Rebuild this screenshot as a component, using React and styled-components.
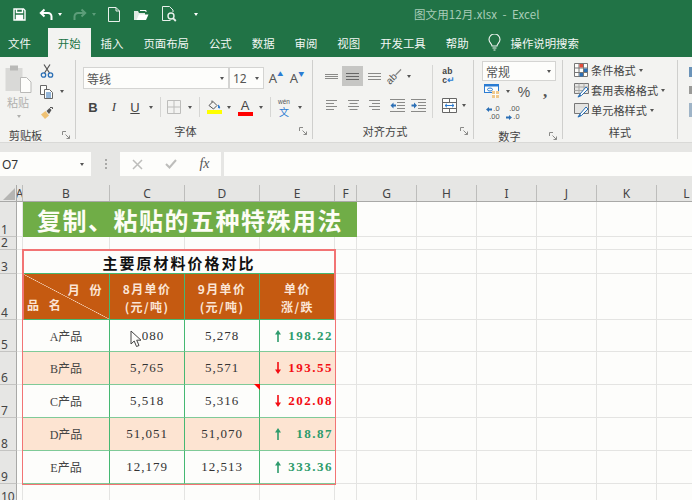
import React from "react";
import styled, { createGlobalStyle } from "styled-components";

const UI_FONT = `"Noto Sans", "Noto Sans CJK SC", sans-serif`;
const CJK_FONT = `"Noto Sans CJK SC", "Noto Sans", sans-serif`;
const CELL_FONT = `"Liberation Serif", "Noto Sans CJK SC", serif`;

const COLS = [17, 6, 87, 75, 75, 75, 22, 60, 60, 60, 60, 60, 60];
const ROWS = [35, 13, 24, 46, 32, 33, 33, 33, 33, 20];
const COL_NAMES = ["A", "B", "C", "D", "E", "F", "G", "H", "I", "J", "K", "L"];

const PRODUCTS = [
  { name: "A产品", aug: "5,080", sep: "5,278", diff: "198.22", up: true },
  { name: "B产品", aug: "5,765", sep: "5,571", diff: "193.55", up: false },
  { name: "C产品", aug: "5,518", sep: "5,316", diff: "202.08", up: false },
  { name: "D产品", aug: "51,051", sep: "51,070", diff: "18.87", up: true },
  { name: "E产品", aug: "12,179", sep: "12,513", diff: "333.36", up: true },
];

const GlobalStyle = createGlobalStyle`
  html, body {
    margin: 0;
    padding: 0;
    width: 692px;
    height: 500px;
    overflow: hidden;
    background: #e6e6e4;
  }
  * { box-sizing: border-box; }
`;

const Page = styled.div`
  width: 692px;
  height: 500px;
  overflow: hidden;
  font-family: ${CJK_FONT};
  background: #e6e6e4;
`;

const TitleBar = styled.div`
  height: 28px;
  display: flex;
  align-items: center;
  background: #217346;
`;

const Slot = styled.div`
  width: ${(p) => p.$w}px;
  height: 100%;
  flex: none;
  display: flex;
  align-items: center;
  justify-content: center;
  color: #444;
`;

const Caret = styled.i`
  width: 0;
  height: 0;
  border-left: 2.5px solid transparent;
  border-right: 2.5px solid transparent;
  border-top: 3px solid ${(p) => p.$color || "#555"};
`;

const FileName = styled.div`
  margin-left: 210px;
  font-size: 11.5px;
  letter-spacing: 0.1px;
  color: #a9cdb8;
  white-space: pre;
`;

const TabBar = styled.div`
  height: 29px;
  display: flex;
  align-items: stretch;
  background: #217346;
`;

const Tab = styled.div`
  padding: 0 10px;
  display: flex;
  align-items: center;
  font-size: 11.4px;
  color: ${(p) => (p.$active ? "#217346" : "#f2f7f4")};
  background: ${(p) => (p.$active ? "#f3f3f1" : "transparent")};
  &:first-child {
    padding-left: 8px;
    padding-right: 17px;
  }
`;

const SearchTab = styled(Tab)`
  margin-left: 9px;
  padding: 0;
  gap: 10px;
`;

const Ribbon = styled.div`
  height: 86px;
  padding: 3px 0;
  display: flex;
  overflow: hidden;
  background: #f3f3f1;
  border-bottom: 1px solid #d9d9d7;
`;

const Group = styled.div`
  width: ${(p) => p.$w}px;
  flex: none;
  display: flex;
  flex-direction: column;
  border-right: 1px solid #cfcfcd;
  &:last-child {
    border-right: none;
  }
`;

const GroupBody = styled.div`
  height: 64px;
  display: flex;
  padding-left: ${(p) => p.$left || 0}px;
  padding-top: ${(p) => p.$top || 0}px;
`;

const GroupLabel = styled.div`
  flex: 1;
  display: flex;
  align-items: center;
  padding-top: 4px;
`;

const LabelText = styled.div`
  flex: 1;
  text-align: center;
  padding-right: ${(p) => p.$pad || 0}px;
  font-size: 11.2px;
  color: #444;
`;

const Launcher = styled.svg`
  width: 9px;
  height: 9px;
  margin-right: 4px;
  flex: none;
`;

const Stack = styled.div`
  display: flex;
  flex-direction: column;
  gap: ${(p) => p.$gap || 0}px;
`;

const Row = styled.div`
  height: ${(p) => p.$h || 22}px;
  display: flex;
  align-items: center;
`;

const PasteColumn = styled.div`
  width: 37px;
  padding-top: 5px;
  flex: none;
  display: flex;
  flex-direction: column;
  align-items: center;
`;

const PasteText = styled.div`
  margin-top: 1px;
  margin-left: -1px;
  font-size: 11px;
  line-height: 16px;
  color: #b0b0ae;
`;

const PasteCaret = styled(Caret)`
  margin-top: 5px;
`;

const ComboBox = styled.div`
  width: ${(p) => p.$w}px;
  height: ${(p) => p.$h || 22}px;
  padding: 0 4px 0 3px;
  flex: none;
  display: flex;
  align-items: center;
  justify-content: space-between;
  font-size: 12px;
  color: #555;
  background: #fdfdfb;
  border: 1px solid #d4d4d2;
`;

const SizeUnit = styled.span`
  font-family: ${UI_FONT};
  font-size: 12px;
`;

const GrowGlyph = styled.span`
  display: flex;
  font-family: ${UI_FONT};
  font-size: 13px;
  line-height: 14px;
  color: #555;
`;

const Mini = styled.span`
  font-size: 6px;
  line-height: 6px;
  color: ${(p) => p.$color || "#2b7cd3"};
`;

const StyleGlyph = styled.span`
  font-family: ${(p) => (p.$serif ? `"Liberation Serif", serif` : `"Liberation Sans", sans-serif`)};
  font-size: 13px;
  font-weight: ${(p) => (p.$bold ? 700 : 400)};
  font-style: ${(p) => (p.$italic ? "italic" : "normal")};
  text-decoration: ${(p) => (p.$under ? "underline" : "none")};
  color: #444;
`;

const RowDivider = styled.i`
  width: 1px;
  height: 20px;
  background: #d6d6d4;
`;

const ColorGlyph = styled.div`
  display: flex;
  flex-direction: column;
  align-items: center;
  width: 16px;
`;

const ColorBar = styled.i`
  width: 15px;
  height: 4px;
  background: ${(p) => p.$color};
`;

const LetterA = styled.span`
  font-family: "Liberation Sans", sans-serif;
  font-size: 13px;
  line-height: 13px;
  color: #444;
`;

const PinyinGlyph = styled.div`
  display: flex;
  flex-direction: column;
  align-items: center;
`;

const Pinyin = styled.span`
  font-family: "Liberation Sans", sans-serif;
  font-size: 6.5px;
  line-height: 8px;
  color: #555;
`;

const PinyinChar = styled.span`
  font-size: 10px;
  line-height: 11px;
  color: #2b7cd3;
`;

const ActiveSlot = styled(Slot)`
  height: 20px;
  background: #c6c6c4;
`;

const ColumnSep = styled.i`
  width: 1px;
  height: 53px;
  margin: 0 5px 0 3px;
  flex: none;
  background: #d6d6d4;
`;

const OrientGlyph = styled.div`
  display: flex;
  align-items: center;
  font-family: "Liberation Sans", sans-serif;
  font-size: 10px;
  line-height: 10px;
  color: #555;
  transform: rotate(-45deg);
`;

const WrapGlyph = styled.div`
  font-family: "Liberation Sans", sans-serif;
  font-size: 8.5px;
  line-height: 9px;
  font-weight: 700;
  letter-spacing: 0.5px;
  color: #444;
`;

const WrapArrow = styled.span`
  color: #2b7cd3;
`;

const Percent = styled.span`
  font-family: "Liberation Sans", sans-serif;
  font-size: 14px;
  color: #555;
`;

const Comma = styled.span`
  font-family: "Liberation Serif", serif;
  font-size: 17px;
  font-weight: 700;
  line-height: 10px;
  color: #555;
`;

const DecimalGlyph = styled.div`
  display: flex;
  flex-direction: column;
  align-items: flex-end;
  font-family: "Liberation Sans", sans-serif;
  font-size: 7.5px;
  line-height: 8px;
  color: #555;
`;

const DecimalLine = styled.span`
  display: flex;
  align-items: center;
  gap: 1px;
`;

const StyleRow = styled.div`
  height: 20px;
  display: flex;
  align-items: center;
  font-size: 11.2px;
  color: #444;
`;

const StyleIcon = styled.div`
  width: 17px;
  flex: none;
  display: flex;
`;

const StyleCaret = styled(Caret)`
  margin-left: 3px;
`;

const CutOff = styled.div`
  padding: 7px 0 0 11px;
  display: flex;
  flex-direction: column;
  gap: 9px;
`;

const CutOffIcon = styled.i`
  width: 4px;
  height: ${(p) => p.$h}px;
  background: ${(p) => p.$color};
`;

const FormulaBar = styled.div`
  height: 24px;
  margin-top: 9px;
  display: flex;
  align-items: stretch;
`;

const NameBox = styled.div`
  width: 91px;
  padding: 0 7px 0 2px;
  flex: none;
  display: flex;
  align-items: center;
  justify-content: space-between;
  font-family: ${UI_FONT};
  font-size: 12px;
  color: #333;
  background: #fdfdfb;
`;

const Grip = styled.div`
  width: 29px;
  flex: none;
  display: flex;
  flex-direction: column;
  align-items: center;
  justify-content: center;
  gap: 2px;
`;

const GripDot = styled.i`
  width: 2px;
  height: 2px;
  background: #a9a9a7;
`;

const FormulaButtons = styled.div`
  width: 101px;
  flex: none;
  display: flex;
  align-items: center;
  background: #fdfdfb;
`;

const FxText = styled.span`
  font-family: "Liberation Serif", serif;
  font-size: 14px;
  font-style: italic;
  color: #555;
`;

const FormulaInput = styled.div`
  flex: 1;
  margin-left: 3px;
  background: #fdfdfb;
`;

const ColumnHead = styled.div`
  height: 17px;
  margin-top: 9px;
  display: grid;
  grid-template-columns: ${COLS.map((c) => `${c}px`).join(" ")};
  border-bottom: 1px solid #a9a9a7;
`;

const Corner = styled.div`
  display: flex;
  align-items: flex-end;
  padding: 0 0 1px 3px;
  border-right: 1px solid #a9a9a7;
`;

const ColName = styled.div`
  display: flex;
  align-items: center;
  justify-content: center;
  padding-top: 1px;
  font-family: ${UI_FONT};
  font-size: 12px;
  line-height: 15px;
  color: #444;
  border-right: 1px solid #bdbdbb;
  overflow: hidden;
`;

const Sheet = styled.div`
  display: grid;
  grid-template-columns: ${COLS.map((c) => `${c}px`).join(" ")};
  grid-template-rows: ${ROWS.map((r) => `${r}px`).join(" ")};
`;

const RowHead = styled.div`
  grid-column: 1;
  grid-row: ${(p) => p.$row};
  padding-left: 1px;
  display: flex;
  align-items: flex-end;
  font-family: ${UI_FONT};
  font-size: 12px;
  line-height: 12px;
  color: #444;
  border-right: 1px solid #a9a9a7;
  border-bottom: 1px solid #c4c4c2;
`;

const GridCell = styled.div`
  grid-column: ${(p) => p.$col};
  grid-row: ${(p) => p.$row};
  background: #fdfdfb;
  border-right: 1px solid #e4e4e2;
  border-bottom: 1px solid #e4e4e2;
`;

const Banner = styled.div`
  grid-column: 3 / 8;
  grid-row: 1;
  display: flex;
  align-items: center;
  justify-content: center;
  font-size: 24px;
  font-weight: 700;
  letter-spacing: 1.5px;
  white-space: nowrap;
  color: #fdfdf5;
  background: #70ad47;
`;

const PriceTable = styled.div`
  grid-column: 3 / 7;
  grid-row: 3 / 10;
  display: grid;
  grid-template-columns: 87px 75px 75px 75px;
  grid-template-rows: ${ROWS.slice(2, 9).map((r) => `${r}px`).join(" ")};
  background: #fdfdfb;
  outline: 2px solid #f27474;
  outline-offset: -1px;
  z-index: 1;
`;

const TableTitle = styled.div`
  grid-column: 1 / 5;
  display: flex;
  align-items: center;
  justify-content: center;
  padding-top: 1px;
  font-size: 15px;
  font-weight: 700;
  letter-spacing: 2px;
  color: #111;
  border-bottom: 1px solid #45b872;
`;

const HeadCell = styled.div`
  display: flex;
  flex-direction: column;
  align-items: center;
  justify-content: center;
  padding-top: 2px;
  font-size: 12px;
  line-height: 18px;
  font-weight: 700;
  letter-spacing: 1.4px;
  white-space: pre;
  color: #fbe5d6;
  background: #c55a11;
  border-right: 1px solid #45b872;
  border-bottom: 1px solid #45b872;
  &:nth-child(5) {
    border-right: none;
  }
`;

const SplitHead = styled(HeadCell)`
  display: block;
  padding: 7px 4px 0 4px;
  background: linear-gradient(
      to top right,
      transparent calc(50% - 0.6px),
      #f6d9c4 50%,
      transparent calc(50% + 0.6px)
    ),
    #c55a11;
`;

const MonthLabel = styled.div`
  text-align: right;
  letter-spacing: 3.5px;
`;

const NameLabel = styled.div`
  margin-top: -3px;
  letter-spacing: 3.5px;
`;

const DataCell = styled.div`
  position: relative;
  display: flex;
  align-items: center;
  justify-content: center;
  font-family: ${CELL_FONT};
  font-size: 13px;
  letter-spacing: 1px;
  color: #333;
  background: ${(p) => (p.$shade ? "#fde4d2" : "#fdfdfb")};
  border-right: 1px solid #45b872;
  border-bottom: 1px solid #7fca98;
`;

const NameCell = styled(DataCell)`
  font-size: 12px;
  letter-spacing: 0;
  color: #444;
`;

const DiffCell = styled(DataCell)`
  justify-content: space-between;
  padding: 0 2px 0 15px;
  font-size: 13px;
  font-weight: 700;
  letter-spacing: 1.5px;
  color: ${(p) => (p.$up ? "#2e9b6c" : "#f30d13")};
  border-right: none;
`;

const CommentMark = styled.i`
  position: absolute;
  top: -1px;
  right: -1px;
  width: 0;
  height: 0;
  border-top: 6px solid #f00;
  border-left: 6px solid transparent;
`;

const PointerIcon = styled.svg`
  position: absolute;
  left: 20px;
  top: 10px;
  width: 12px;
  height: 18px;
`;

const SaveIcon = () => (
  <svg width="13" height="13" viewBox="0 0 13 13" fill="none" stroke="#fff" strokeWidth="1.4">
    <path d="M1 1h9.5L12 2.5V12H1z" />
    <path d="M3.5 1v3.5h6V1" />
    <path d="M3.5 12V7.5h6V12" fill="#fff" />
  </svg>
);

const UndoIcon = ({ color = "#fff" }) => (
  <svg width="15" height="13" viewBox="0 0 15 13" fill="none" stroke={color} strokeWidth="2">
    <path d="M5.5 1.5 1.8 5l3.7 3.5" />
    <path d="M2 5h7a3.5 3.5 0 0 1 3.5 3.5v3.5" />
  </svg>
);

const RedoIcon = () => (
  <svg width="15" height="13" viewBox="0 0 15 13" fill="none" stroke="#5c9d79" strokeWidth="2">
    <path d="M9.5 1.5 13.2 5 9.5 8.5" />
    <path d="M13 5H6a3.5 3.5 0 0 0-3.5 3.5V12" />
  </svg>
);

const NewIcon = () => (
  <svg width="12" height="15" viewBox="0 0 12 15" fill="none" stroke="#e8f0eb" strokeWidth="1">
    <path d="M.5.5h7.5L11.5 4v10.5H.5z" />
    <path d="M8 .5V4h3.5" />
  </svg>
);

const OpenIcon = () => (
  <svg width="16" height="13" viewBox="0 0 16 13">
    <path d="M1 3V12h11V5H6L5 3z" fill="#dfe9e3" />
    <path d="M3.5 12 6 6.5h9.5L13 12z" fill="#fff" />
    <path d="M7 2.5h6V4" fill="none" stroke="#fff" />
  </svg>
);

const PreviewIcon = () => (
  <svg width="15" height="16" viewBox="0 0 15 16" fill="none" stroke="#e8f0eb">
    <path d="M8.5 14.5h-8V.5h7L11 4v2" />
    <circle cx="9" cy="10" r="3" strokeWidth="1.4" />
    <path d="m11 12.2 2.8 2.8" strokeWidth="1.8" />
  </svg>
);

const BulbIcon = () => (
  <svg width="13" height="17" viewBox="0 0 13 17" fill="none" stroke="#f2f7f4" strokeWidth="1.1">
    <path d="M4 12c0-2-3-3.500-3-6.500a5.500 5.500 0 0 1 11 0C12 8.500 9 10 9 12z" />
    <path d="M4.500 14h4M5.500 16h2" />
  </svg>
);

const LauncherIcon = () => (
  <Launcher viewBox="0 0 9 9" fill="none" stroke="#8a8a88">
    <path d="M.5 4V.5H4" />
    <path d="M3.500 3.500 7.500 7.500M7.500 4.500v3h-3" />
  </Launcher>
);

const PasteIcon = () => (
  <svg width="27" height="28" viewBox="0 0 27 28">
    <rect x="0.500" y="3" width="17" height="23" fill="#d9d9d7" />
    <rect x="5" y="0.500" width="8" height="5" fill="#b9b9b7" />
    <path d="M15.500 12.500h6l4.500 4.500v10.500h-10.500z" fill="#fdfdfb" stroke="#b9b9b7" />
  </svg>
);

const ScissorsIcon = () => (
  <svg width="14" height="14" viewBox="0 0 14 14" fill="none">
    <path d="M4 .5 9.500 9M10 .5 4.500 9" stroke="#555" strokeWidth="1.2" />
    <circle cx="3.500" cy="11" r="2.200" stroke="#2b6fb5" strokeWidth="1.3" />
    <circle cx="10.500" cy="11" r="2.200" stroke="#2b6fb5" strokeWidth="1.3" />
  </svg>
);

const CopyIcon = () => (
  <svg width="14" height="14" viewBox="0 0 14 14" fill="#fdfdfb" stroke="#666">
    <path d="M.5.500h6v9h-6z" />
    <path d="M4.500 4.500h5l3 3v6h-8z" />
    <path d="M6 8h5M6 10h5M6 12h5" stroke="#2b6fb5" />
  </svg>
);

const BrushIcon = () => (
  <svg width="14" height="14" viewBox="0 0 14 14">
    <path d="M1 8.500 5.500 5 9 9.500 5 13z" fill="#f0c274" />
    <path d="M6.500 5 9.500 2l2 2-2.500 4z" fill="#555" />
    <path d="M10 1.500h2.500V3" stroke="#555" fill="none" />
  </svg>
);

const BorderIcon = () => (
  <svg width="14" height="14" viewBox="0 0 14 14" fill="none" stroke="#bdbdbb">
    <path d="M.5.500h13v13H.5zM7 .5v13M.5 7h13" />
  </svg>
);

const FillIcon = () => (
  <svg width="15" height="10" viewBox="0 0 15 10" fill="none">
    <path d="M2 5.500 6 1.500l4 4-3.500 3.500z" stroke="#555" />
    <path d="M5 2.500V.5" stroke="#555" />
    <path d="M11 4.500c1.500 1 2.500 2 2 4l-2-.5z" fill="#2b7cd3" />
  </svg>
);

const LinesIcon = ({ widths = [14, 10, 14], align = "left", gap = 3, color = "#8a8a88" }) => {
  const max = Math.max(...widths);
  return (
    <svg width={max} height={(widths.length - 1) * gap + 1} viewBox={`0 0 ${max} ${(widths.length - 1) * gap + 1}`}>
      {widths.map((w, i) => {
        const x = align === "left" ? 0 : align === "right" ? max - w : (max - w) / 2;
        return <rect key={i} x={x} y={i * gap} width={w} height="1" fill={color} />;
      })}
    </svg>
  );
};

const OrientIcon = () => (
  <OrientGlyph>
    ab
    <svg width="8" height="4" viewBox="0 0 8 4" stroke="#8a8a88" strokeWidth="1.300">
      <path d="M0 2h8" />
    </svg>
  </OrientGlyph>
);

const IndentIcon = ({ flip }) => (
  <svg width="15" height="13" viewBox="0 0 15 13">
    <g fill="#8a8a88">
      <rect x="0" y="0" width="15" height="1" />
      <rect x="7" y="3" width="8" height="1" />
      <rect x="7" y="6" width="8" height="1" />
      <rect x="7" y="9" width="8" height="1" />
      <rect x="0" y="12" width="15" height="1" />
    </g>
    <path
      d={flip ? "M6 6.500 3 3.500v2H.5v2H3v2z" : "M.5 6.500l3-3v2H6v2H3.500v2z"}
      fill="#2b6fb5"
    />
  </svg>
);

const MergeIcon = () => (
  <svg width="15" height="15" viewBox="0 0 15 15" fill="#fdfdfb" stroke="#666">
    <path d="M.5.500h14v14H.5z" />
    <path d="M.5 4.500h14M.5 10.500h14M7.500.5v4M7.500 10.500v4" />
    <path d="M3 7.500h9M5 5.800 3 7.500l2 1.700M10 5.800l2 1.700-2 1.700" stroke="#2b7cd3" fill="none" />
  </svg>
);

const CurrencyIcon = () => (
  <svg width="16" height="15" viewBox="0 0 16 15">
    <rect x="0.500" y="0.500" width="14" height="8" fill="#fdfdfb" stroke="#2b7cd3" />
    <rect x="0.500" y="0.500" width="14" height="2" fill="#2b7cd3" />
    <ellipse cx="6" cy="5.500" rx="2.500" ry="1.500" fill="none" stroke="#2b7cd3" />
    <rect x="8" y="7" width="7" height="7" fill="#f0c98c" />
    <path d="M8 10.500h7M11.500 7v7" stroke="#fdfdfb" />
  </svg>
);

const DecimalArrow = ({ flip }) => (
  <svg width="6" height="5" viewBox="0 0 6 5" fill="#2b6fb5">
    <path d={flip ? "M6 2.500 3 0v1.500H0v2h3V5z" : "M0 2.500 3 0v1.500h3v2H3V5z"} />
  </svg>
);

const CondIcon = () => (
  <svg width="15" height="14" viewBox="0 0 15 14" stroke="#777" fill="#fdfdfb">
    <path d="M.5.500h13v13H.5zM.5 5h13M.5 9.500h13M5 .5v13M9.500.5v13" />
    <rect x="5.500" y="1" width="3.500" height="3.500" fill="#e24b3b" stroke="none" />
    <rect x="10" y="5.500" width="3.500" height="3.500" fill="#2b6fb5" stroke="none" />
    <rect x="5.500" y="10" width="3.500" height="3.500" fill="#2b6fb5" stroke="none" />
  </svg>
);

const TableStyleIcon = () => (
  <svg width="16" height="15" viewBox="0 0 16 15" fill="none">
    <path d="M.5.500h14v10H.5z" fill="#e4e4e2" stroke="#777" />
    <path d="M.5 4h14M.5 7.500h14M5 .5v10M10 .5v10" stroke="#a9a9a7" />
    <path d="M12 4 6 11l-2 3 3.500-1.500L14 6z" fill="#fdfdfb" stroke="#2b6fb5" />
    <path d="M3.500 14.500 6 11l1.500 1.500z" fill="#2b6fb5" />
  </svg>
);

const CellStyleIcon = () => (
  <svg width="16" height="15" viewBox="0 0 16 15" fill="none">
    <path d="M.5.500h14v10H.5z" fill="#e4e4e2" stroke="#777" />
    <path d="M12 4 6 11l-2 3 3.500-1.500L14 6z" fill="#fdfdfb" stroke="#2b6fb5" />
    <path d="M3.500 14.500 6 11l1.500 1.500z" fill="#2b6fb5" />
  </svg>
);

const TrendArrow = ({ up }) => (
  <svg width="6" height="12" viewBox="0 0 6 12" fill={up ? "#2e9b6c" : "#f30d13"}>
    {up ? (
      <path d="M3 0 6 4.500H3.800V12H2.200V4.500H0z" />
    ) : (
      <path d="M3 12 6 7.500H3.800V0H2.200v7.500H0z" />
    )}
  </svg>
);

const TAB_NAMES = ["文件", "开始", "插入", "页面布局", "公式", "数据", "审阅", "视图", "开发工具", "帮助"];

const ClipboardGroup = () => (
  <Group $w={76}>
    <GroupBody>
      <PasteColumn>
        <PasteIcon />
        <PasteText>粘贴</PasteText>
        <PasteCaret $color="#b0b0ae" />
      </PasteColumn>
      <Stack>
        <Row $h={21}>
          <Slot $w={20}><ScissorsIcon /></Slot>
        </Row>
        <Row $h={21}>
          <Slot $w={20}><CopyIcon /></Slot>
          <Slot $w={10}><Caret /></Slot>
        </Row>
        <Row $h={21}>
          <Slot $w={20}><BrushIcon /></Slot>
        </Row>
      </Stack>
    </GroupBody>
    <GroupLabel>
      <LabelText $pad={11}>剪贴板</LabelText>
      <LauncherIcon />
    </GroupLabel>
  </Group>
);

const FontGroup = () => (
  <Group $w={237}>
    <GroupBody $left={7} $top={7}>
      <Stack $gap={7}>
        <Row>
          <ComboBox $w={146}>
            等线
            <Caret />
          </ComboBox>
          <ComboBox $w={35}>
            <SizeUnit>12</SizeUnit>
            <Caret />
          </ComboBox>
          <Slot $w={24}>
            <GrowGlyph>A<Mini>▲</Mini></GrowGlyph>
          </Slot>
          <Slot $w={18}>
            <GrowGlyph>A<Mini>▼</Mini></GrowGlyph>
          </Slot>
        </Row>
        <Row>
          <Slot $w={20}><StyleGlyph $bold>B</StyleGlyph></Slot>
          <Slot $w={22}><StyleGlyph $italic $serif>I</StyleGlyph></Slot>
          <Slot $w={20}><StyleGlyph $under>U</StyleGlyph></Slot>
          <Slot $w={12}><Caret /></Slot>
          <Slot $w={6}><RowDivider /></Slot>
          <Slot $w={22}><BorderIcon /></Slot>
          <Slot $w={10}><Caret /></Slot>
          <Slot $w={8}><RowDivider /></Slot>
          <Slot $w={22}>
            <ColorGlyph>
              <FillIcon />
              <ColorBar $color="#ffff00" />
            </ColorGlyph>
          </Slot>
          <Slot $w={8}><Caret /></Slot>
          <Slot $w={24}>
            <ColorGlyph>
              <LetterA>A</LetterA>
              <ColorBar $color="#ff0000" />
            </ColorGlyph>
          </Slot>
          <Slot $w={8}><Caret /></Slot>
          <Slot $w={10}><RowDivider /></Slot>
          <Slot $w={18}>
            <PinyinGlyph>
              <Pinyin>wén</Pinyin>
              <PinyinChar>文</PinyinChar>
            </PinyinGlyph>
          </Slot>
          <Slot $w={14}><Caret /></Slot>
        </Row>
      </Stack>
    </GroupBody>
    <GroupLabel>
      <LabelText $pad={4}>字体</LabelText>
      <LauncherIcon />
    </GroupLabel>
  </Group>
);

const AlignGroup = () => (
  <Group $w={161}>
    <GroupBody $left={8} $top={5}>
      <Stack $gap={7}>
        <Row>
          <Slot $w={21}><LinesIcon widths={[13, 13, 13]} gap={2} /></Slot>
          <ActiveSlot $w={21}><LinesIcon widths={[13, 13, 13]} gap={3} color="#666" /></ActiveSlot>
          <Slot $w={22}><LinesIcon widths={[13, 13, 13]} gap={3} /></Slot>
          <Slot $w={20}><OrientIcon /></Slot>
          <Slot $w={8}><Caret /></Slot>
          <Slot $w={16} />
        </Row>
        <Row>
          <Slot $w={21}><LinesIcon widths={[11, 8, 11, 8]} gap={3} /></Slot>
          <Slot $w={22}><LinesIcon widths={[11, 8, 11, 8]} gap={3} align="center" /></Slot>
          <Slot $w={20}><LinesIcon widths={[11, 8, 11, 8]} gap={3} align="right" /></Slot>
          <Slot $w={26}><IndentIcon /></Slot>
          <Slot $w={16}><IndentIcon flip /></Slot>
        </Row>
      </Stack>
      <ColumnSep />
      <Stack $gap={7}>
        <Row>
          <Slot $w={22}>
            <WrapGlyph>
              ab
              <br />
              c<WrapArrow>↵</WrapArrow>
            </WrapGlyph>
          </Slot>
        </Row>
        <Row>
          <Slot $w={22}><MergeIcon /></Slot>
          <Slot $w={8}><Caret /></Slot>
        </Row>
      </Stack>
    </GroupBody>
    <GroupLabel>
      <LabelText $pad={3}>对齐方式</LabelText>
      <LauncherIcon />
    </GroupLabel>
  </Group>
);

const NumberGroup = () => (
  <Group $w={89}>
    <GroupBody $left={8} $top={1}>
      <Stack $gap={1}>
        <ComboBox $w={74} $h={20}>
          常规
          <Caret />
        </ComboBox>
        <Row $h={20}>
          <Slot $w={20}><CurrencyIcon /></Slot>
          <Slot $w={12}><Caret /></Slot>
          <Slot $w={20}><Percent>%</Percent></Slot>
          <Slot $w={22}><Comma>,</Comma></Slot>
        </Row>
        <Row $h={22}>
          <Slot $w={22}>
            <DecimalGlyph>
              <DecimalLine><DecimalArrow />.0</DecimalLine>
              <span>.00</span>
            </DecimalGlyph>
          </Slot>
          <Slot $w={18}>
            <DecimalGlyph>
              <span>.00</span>
              <DecimalLine><DecimalArrow flip />.0</DecimalLine>
            </DecimalGlyph>
          </Slot>
        </Row>
      </Stack>
    </GroupBody>
    <GroupLabel>
      <LabelText $pad={4}>数字</LabelText>
      <LauncherIcon />
    </GroupLabel>
  </Group>
);

const StylesGroup = () => (
  <Group $w={115}>
    <GroupBody $left={11}>
      <Stack>
        <StyleRow>
          <StyleIcon><CondIcon /></StyleIcon>
          条件格式
          <StyleCaret />
        </StyleRow>
        <StyleRow>
          <StyleIcon><TableStyleIcon /></StyleIcon>
          套用表格格式
          <StyleCaret />
        </StyleRow>
        <StyleRow>
          <StyleIcon><CellStyleIcon /></StyleIcon>
          单元格样式
          <StyleCaret />
        </StyleRow>
      </Stack>
    </GroupBody>
    <GroupLabel>
      <LabelText>样式</LabelText>
    </GroupLabel>
  </Group>
);

const PriceRow = ({ item, index }) => {
  const shade = index % 2 === 1;
  return (
    <>
      <NameCell $shade={shade}>{item.name}</NameCell>
      <DataCell $shade={shade}>
        {item.aug}
        {index === 0 && (
          <PointerIcon viewBox="0 0 12 18">
            <rect width="12" height="12" fill="#fdfdfb" />
            <path d="M1 1v13l3.200-3 2.300 5.500 2.500-1-2.300-5.300H11z" fill="#fdfdfb" stroke="#444" />
          </PointerIcon>
        )}
      </DataCell>
      <DataCell $shade={shade}>
        {item.sep}
        {index === 2 && <CommentMark />}
      </DataCell>
      <DiffCell $shade={shade} $up={item.up}>
        <TrendArrow up={item.up} />
        {item.diff}
      </DiffCell>
    </>
  );
};

export default function App() {
  return (
    <Page>
      <GlobalStyle />
      <TitleBar>
        <Slot $w={38}><SaveIcon /></Slot>
        <Slot $w={16}><UndoIcon /></Slot>
        <Slot $w={12}><Caret $color="#fff" /></Slot>
        <Slot $w={26}><RedoIcon /></Slot>
        <Slot $w={4}><Caret $color="#5c9d79" /></Slot>
        <Slot $w={36}><NewIcon /></Slot>
        <Slot $w={18}><OpenIcon /></Slot>
        <Slot $w={38}><PreviewIcon /></Slot>
        <Slot $w={16}><Caret $color="#fff" /></Slot>
        <FileName>图文用12月.xlsx  -  Excel</FileName>
      </TitleBar>

      <TabBar>
        {TAB_NAMES.map((name) => (
          <Tab key={name} $active={name === "开始"}>{name}</Tab>
        ))}
        <SearchTab>
          <BulbIcon />
          操作说明搜索
        </SearchTab>
      </TabBar>

      <Ribbon>
        <ClipboardGroup />
        <FontGroup />
        <AlignGroup />
        <NumberGroup />
        <StylesGroup />
        <Group $w={14}>
          <CutOff>
            <CutOffIcon $h={10} $color="#6b93b8" />
            <CutOffIcon $h={8} $color="#9a9a98" />
            <CutOffIcon $h={14} $color="#9fb4c7" />
          </CutOff>
        </Group>
      </Ribbon>

      <FormulaBar>
        <NameBox>
          O7
          <Caret />
        </NameBox>
        <Grip>
          <GripDot />
          <GripDot />
          <GripDot />
        </Grip>
        <FormulaButtons>
          <Slot $w={34}>
            <svg width="11" height="11" viewBox="0 0 11 11" stroke="#bdbdbb" strokeWidth="1.500">
              <path d="M1 1l9 9M10 1l-9 9" />
            </svg>
          </Slot>
          <Slot $w={34}>
            <svg width="12" height="10" viewBox="0 0 12 10" fill="none" stroke="#bdbdbb" strokeWidth="2">
              <path d="M1 5l3.500 3.500L11 1" />
            </svg>
          </Slot>
          <Slot $w={33}><FxText>fx</FxText></Slot>
        </FormulaButtons>
        <FormulaInput />
      </FormulaBar>

      <ColumnHead>
        <Corner>
          <svg width="12" height="12" viewBox="0 0 12 12">
            <path d="M12 0v12H0z" fill="#b5b5b3" />
          </svg>
        </Corner>
        {COL_NAMES.map((name) => (
          <ColName key={name}>{name}</ColName>
        ))}
      </ColumnHead>

      <Sheet>
        {ROWS.map((_, r) => (
          <React.Fragment key={r}>
            <RowHead $row={r + 1}>{r + 1}</RowHead>
            {COL_NAMES.map((name, c) => (
              <GridCell key={name} $row={r + 1} $col={c + 2} />
            ))}
          </React.Fragment>
        ))}

        <Banner>复制、粘贴的五种特殊用法</Banner>

        <PriceTable>
          <TableTitle>主要原材料价格对比</TableTitle>
          <SplitHead>
            <MonthLabel>月 份</MonthLabel>
            <NameLabel>品 名</NameLabel>
          </SplitHead>
          <HeadCell>
            <span>8月单价</span>
            <span>(元/吨)</span>
          </HeadCell>
          <HeadCell>
            <span>9月单价</span>
            <span>(元/吨)</span>
          </HeadCell>
          <HeadCell>
            <span>单价</span>
            <span>涨/跌</span>
          </HeadCell>
          {PRODUCTS.map((item, i) => (
            <PriceRow key={item.name} item={item} index={i} />
          ))}
        </PriceTable>
      </Sheet>
    </Page>
  );
}
